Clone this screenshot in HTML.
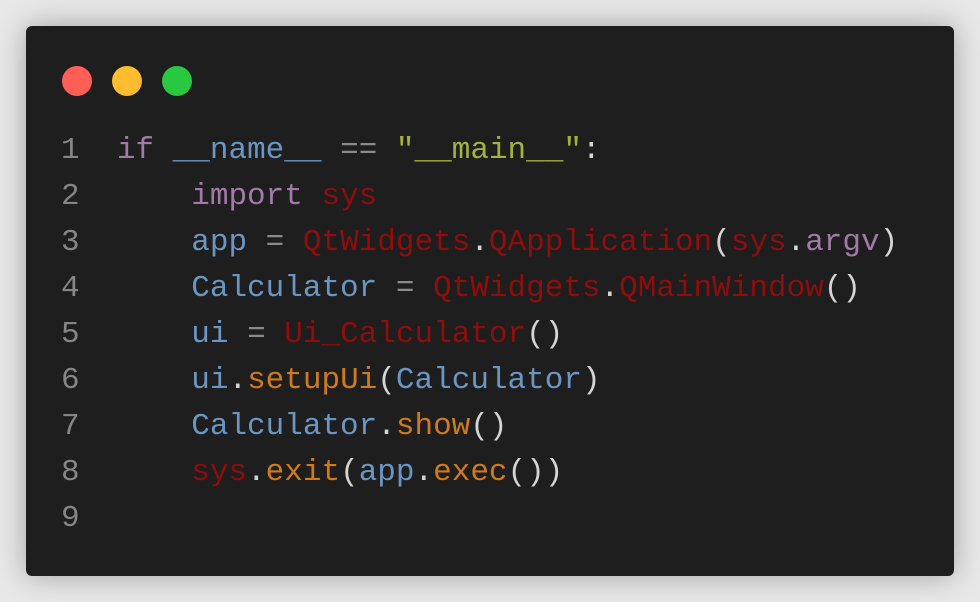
<!DOCTYPE html>
<html><head><style>
html,body{margin:0;width:980px;height:602px;background:#e8e8e8;overflow:hidden}
.win{position:absolute;left:26px;top:26px;width:928px;height:550px;background:#1e1e1e;border-radius:6px;box-shadow:0 0 30px rgba(0,0,0,.3)}
.dot{position:absolute;top:40px;width:30px;height:30px;border-radius:50%}
pre{position:absolute;left:35px;top:102px;margin:0;font-family:"Liberation Mono","DejaVu Sans Mono",monospace;font-size:31px;line-height:46px;color:#d4d4d4}
.n{color:#858585}.k{color:#a279a8}.b{color:#6a96c4}.r{color:#8e0d0d}.s{color:#a4b13a}.o{color:#d07a1e}.g{color:#8a8a8a}
</style></head><body>
<div class="win">
<div class="dot" style="left:36px;background:#ff5f57"></div>
<div class="dot" style="left:86px;background:#febc2e"></div>
<div class="dot" style="left:136px;background:#28c840"></div>
<pre><span class="n">1</span>  <span class="k">if</span> <span class="b">__name__</span> <span class="g">==</span> <span class="s">"__main__"</span>:
<span class="n">2</span>      <span class="k">import</span> <span class="r">sys</span>
<span class="n">3</span>      <span class="b">app</span> <span class="g">=</span> <span class="r">QtWidgets</span>.<span class="r">QApplication</span>(<span class="r">sys</span>.<span class="k">argv</span>)
<span class="n">4</span>      <span class="b">Calculator</span> <span class="g">=</span> <span class="r">QtWidgets</span>.<span class="r">QMainWindow</span>()
<span class="n">5</span>      <span class="b">ui</span> <span class="g">=</span> <span class="r">Ui_Calculator</span>()
<span class="n">6</span>      <span class="b">ui</span>.<span class="o">setupUi</span>(<span class="b">Calculator</span>)
<span class="n">7</span>      <span class="b">Calculator</span>.<span class="o">show</span>()
<span class="n">8</span>      <span class="r">sys</span>.<span class="o">exit</span>(<span class="b">app</span>.<span class="o">exec</span>())
<span class="n">9</span></pre>
</div>
</body></html>
